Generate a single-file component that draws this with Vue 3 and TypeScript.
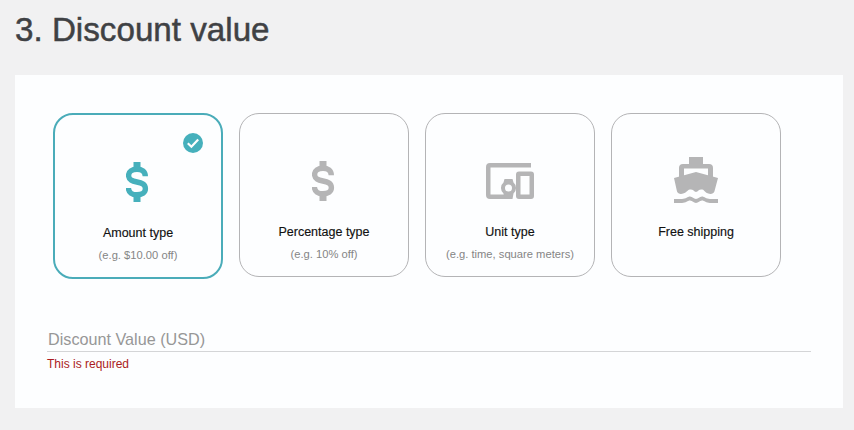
<script setup lang="ts">
interface Card { title: string; sub: string; icon: string; selected?: boolean }
const cards: Card[] = [
  { title: 'Amount type', sub: '(e.g. $10.00 off)', icon: 'dollar', selected: true },
  { title: 'Percentage type', sub: '(e.g. 10% off)', icon: 'dollar' },
  { title: 'Unit type', sub: '(e.g. time, square meters)', icon: 'devices' },
  { title: 'Free shipping', sub: '', icon: 'boat' },
]
</script>

<template>
  <main class="page">
    <h1 class="title">3. Discount value</h1>
    <section class="panel">
      <div class="cards">
        <div v-for="c in cards" :key="c.title" class="card" :class="{ selected: c.selected }">
          <svg v-if="c.selected" class="check" viewBox="0 0 20 20" width="20" height="20">
            <circle cx="10" cy="10" r="10" fill="#46b0bc" />
            <path d="M4.8 10.2l3.6 3.500 6.800-7.200" fill="none" stroke="#fff" stroke-width="2.200" />
          </svg>
          <div class="icon">
            <svg v-if="c.icon === 'dollar'" viewBox="1 0 24 40" width="24" height="40">
              <path d="M8.500 0h7v6h-7zM8.500 34h7v6h-7z" fill="currentColor" />
              <path d="M20.300 14.200C20.300 9.600 16.800 7.200 12 7.200 7 7.200 3.600 9.600 3.600 13.400c0 9.600 16.800 3.600 16.800 13.400 0 3.800-3.500 6-8.400 6-5 0-8.400-2.400-8.600-6.800" fill="none" stroke="currentColor" stroke-width="5.400" />
            </svg>
            <svg v-else-if="c.icon === 'devices'" viewBox="0 0 48 36" width="48" height="36">
              <path d="M45 0H4a4 4 0 0 0-4 4v28a4 4 0 0 0 4 4h15v-4.400H4.500V4.500H45z" fill="currentColor" />
              <path fill-rule="evenodd" d="M33 8.500h12a3 3 0 0 1 3 3V33a3 3 0 0 1-3 3H33a3 3 0 0 1-3-3V11.500a3 3 0 0 1 3-3zm1.500 4.500v18.500h9V13z" fill="currentColor" />
              <path fill-rule="evenodd" d="M18.500 16h8l1 3.600a7 7 0 0 1 0 10.800l-1 5.600h-8l-1-5.600a7 7 0 0 1 0-10.800zm4 5.500a3.500 3.500 0 1 0 0 7 3.500 3.500 0 0 0 0-7z" fill="currentColor" />
            </svg>
            <svg v-else viewBox="0 0 44 48" width="44" height="48">
              <path fill-rule="evenodd" d="M15 0h14v7h6a4 4 0 0 1 4 4v10H5V11a4 4 0 0 1 4-4h6zM10 11.500V19h24v-7.500z" fill="currentColor" />
              <path d="M22 15l22 6-3.600 13.500c-.6 1.500-2 2.500-4 2.500-3 0-5.400-2-7.200-4.200-2-.8-3.600-.4-4.800.8-1 1-1.600 1.400-2.400 1.400s-1.400-.4-2.400-1.400c-1.200-1.200-2.800-1.600-4.800-.8C12.400 35 10 37 7 37c-2 0-3.400-1-4-2.500L0 21z" fill="currentColor" />
              <path d="M0 42h8c4 0 5.500-2.400 8-2.400 2.600 0 3.500 2.400 6 2.400s3.400-2.400 6-2.400c2.500 0 4 2.400 8 2.400h8v4h-8c-4 0-5.500-2.400-8-2.400-2.600 0-3.500 2.400-6 2.400s-3.400-2.400-6-2.400c-2.500 0-4 2.400-8 2.400H0z" fill="currentColor" />
            </svg>
          </div>
          <div class="name">{{ c.title }}</div>
          <div class="sub">{{ c.sub }}</div>
        </div>
      </div>
      <div class="field">
        <div class="label">Discount Value (USD)</div>
        <div class="error">This is required</div>
      </div>
    </section>
  </main>
</template>

<style scoped>
.page {
  box-sizing: border-box;
  width: 854px;
  height: 430px;
  padding: 12px 11px 0 15px;
  background: #f1f1f2;
  font-family: "Liberation Sans", Arial, sans-serif;
  overflow: hidden;
}
.title {
  margin: 0 0 27px;
  font-size: 33.2px;
  line-height: 36px;
  font-weight: 400;
  color: #3f4144;
  -webkit-text-stroke: 0.5px #3f4144;
}
.panel {
  box-sizing: border-box;
  height: 333px;
  padding: 38px 32px 0 32px;
  background: #fdfeff;
}
.cards {
  display: flex;
  align-items: flex-start;
  gap: 16px;
  padding-left: 6px;
}
.card {
  position: relative;
  box-sizing: border-box;
  width: 170px;
  height: 164px;
  padding-top: 42px;
  border: 1px solid #b4b4b6;
  border-radius: 20px;
  text-align: center;
}
.card.selected {
  height: 166px;
  border: 2px solid #4aacb9;
}
.check {
  position: absolute;
  top: 18px;
  right: 18px;
}
.icon {
  display: flex;
  align-items: center;
  justify-content: center;
  height: 50px;
  color: #b5b5b6;
}
.selected .icon { color: #46b0bc; }
.name {
  margin-top: 18px;
  font-size: 12.5px;
  line-height: 16px;
  color: #111;
  -webkit-text-stroke: 0.15px #111;
}
.sub {
  margin-top: 7px;
  font-size: 11.2px;
  line-height: 14px;
  color: #858585;
}
.field { margin-top: 50px; }
.label {
  height: 22px;
  padding-left: 1px;
  font-size: 16.2px;
  line-height: 20px;
  color: #979797;
  border-bottom: 1px solid #d4d5d7;
}
.error {
  margin-top: 4px;
  font-size: 12px;
  line-height: 16px;
  color: #ab1c22;
}
</style>
